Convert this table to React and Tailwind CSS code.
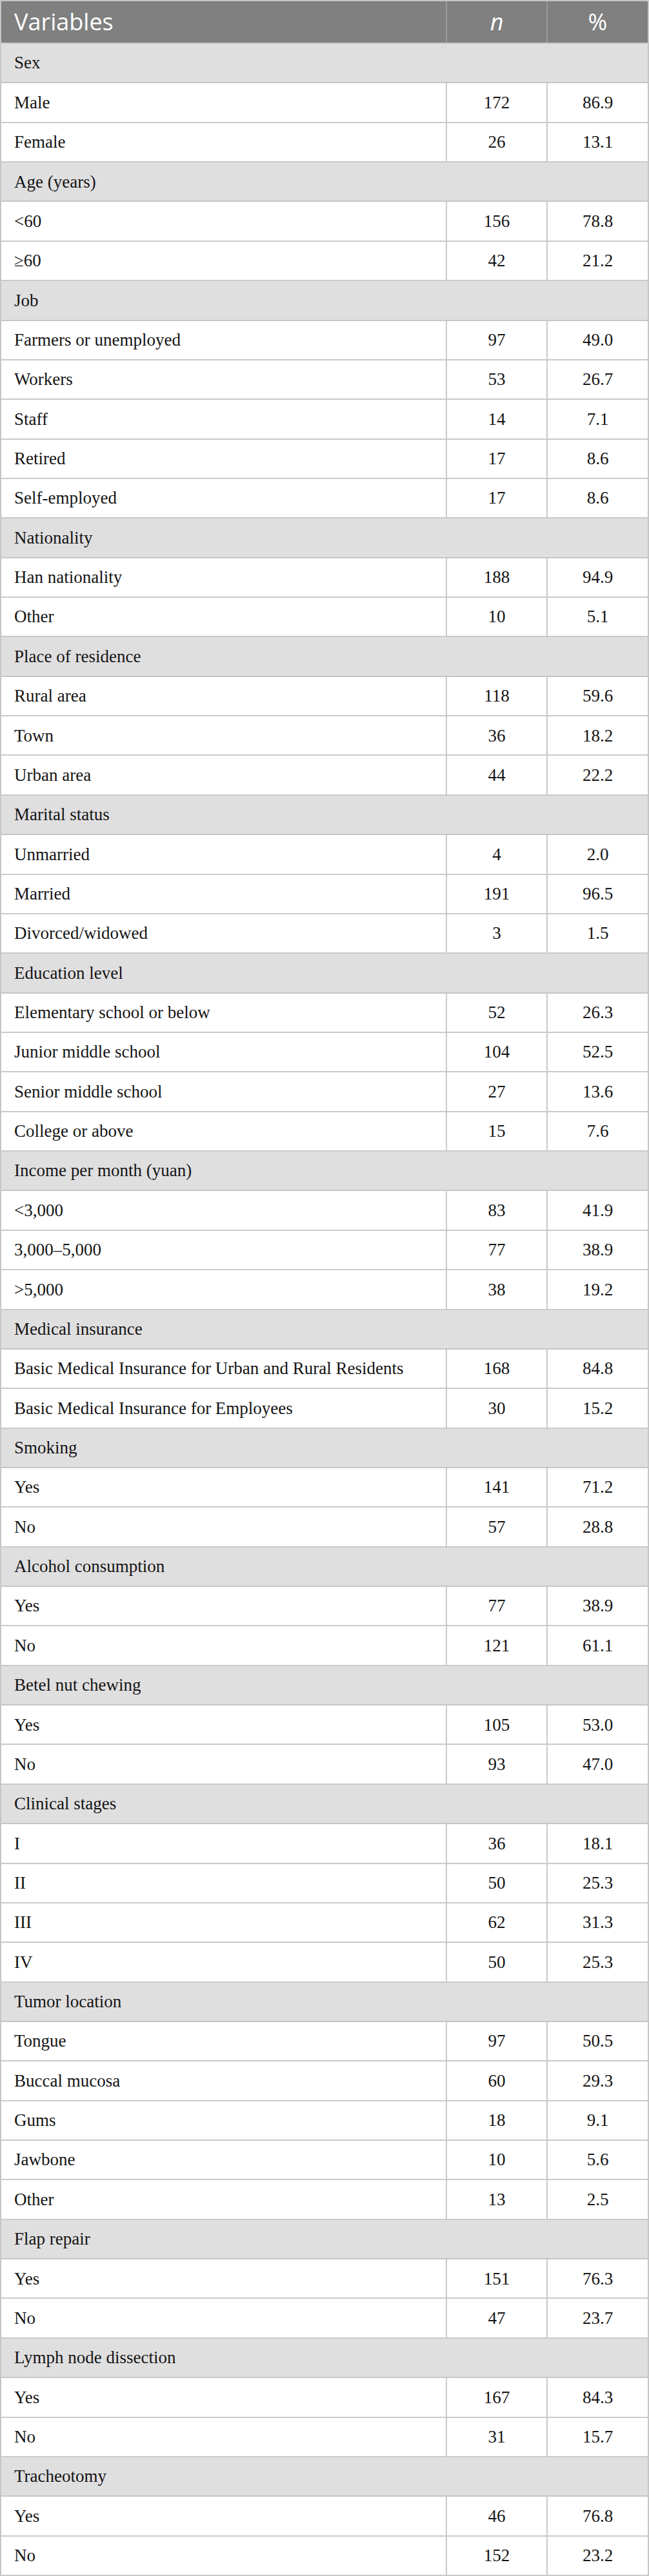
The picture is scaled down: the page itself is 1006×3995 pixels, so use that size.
const groups = [
  ["Sex", [["Male", "172", "86.9"], ["Female", "26", "13.1"]]],
  ["Age (years)", [["<60", "156", "78.8"], ["≥60", "42", "21.2"]]],
  [
    "Job",
    [
      ["Farmers or unemployed", "97", "49.0"],
      ["Workers", "53", "26.7"],
      ["Staff", "14", "7.1"],
      ["Retired", "17", "8.6"],
      ["Self-employed", "17", "8.6"],
    ],
  ],
  ["Nationality", [["Han nationality", "188", "94.9"], ["Other", "10", "5.1"]]],
  [
    "Place of residence",
    [
      ["Rural area", "118", "59.6"],
      ["Town", "36", "18.2"],
      ["Urban area", "44", "22.2"],
    ],
  ],
  [
    "Marital status",
    [
      ["Unmarried", "4", "2.0"],
      ["Married", "191", "96.5"],
      ["Divorced/widowed", "3", "1.5"],
    ],
  ],
  [
    "Education level",
    [
      ["Elementary school or below", "52", "26.3"],
      ["Junior middle school", "104", "52.5"],
      ["Senior middle school", "27", "13.6"],
      ["College or above", "15", "7.6"],
    ],
  ],
  [
    "Income per month (yuan)",
    [
      ["<3,000", "83", "41.9"],
      ["3,000–5,000", "77", "38.9"],
      [">5,000", "38", "19.2"],
    ],
  ],
  [
    "Medical insurance",
    [
      ["Basic Medical Insurance for Urban and Rural Residents", "168", "84.8"],
      ["Basic Medical Insurance for Employees", "30", "15.2"],
    ],
  ],
  ["Smoking", [["Yes", "141", "71.2"], ["No", "57", "28.8"]]],
  ["Alcohol consumption", [["Yes", "77", "38.9"], ["No", "121", "61.1"]]],
  ["Betel nut chewing", [["Yes", "105", "53.0"], ["No", "93", "47.0"]]],
  [
    "Clinical stages",
    [
      ["I", "36", "18.1"],
      ["II", "50", "25.3"],
      ["III", "62", "31.3"],
      ["IV", "50", "25.3"],
    ],
  ],
  [
    "Tumor location",
    [
      ["Tongue", "97", "50.5"],
      ["Buccal mucosa", "60", "29.3"],
      ["Gums", "18", "9.1"],
      ["Jawbone", "10", "5.6"],
      ["Other", "13", "2.5"],
    ],
  ],
  ["Flap repair", [["Yes", "151", "76.3"], ["No", "47", "23.7"]]],
  ["Lymph node dissection", [["Yes", "167", "84.3"], ["No", "31", "15.7"]]],
  ["Tracheotomy", [["Yes", "46", "76.8"], ["No", "152", "23.2"]]],
];

function GroupRow({ label }) {
  return (
    <div className="h-[61.36px] flex items-center px-[20px] bg-[#e0dfe0] border-b-2 border-[#c6c6c6]">
      {label}
    </div>
  );
}

function DataRow({ label, n, pct }) {
  return (
    <div className="h-[61.36px] grid grid-cols-[691px_156px_1fr] border-b-2 border-[#cacaca] bg-white">
      <div className="flex items-center px-[20px] border-r-2 border-[#cacaca] whitespace-nowrap">{label}</div>
      <div className="flex items-center justify-center border-r-2 border-[#cacaca]">{n}</div>
      <div className="flex items-center justify-center">{pct}</div>
    </div>
  );
}

export default function App() {
  return (
    <div className="w-[1006px] bg-white">
      <div className="border-2 border-b-0 border-[#c6c6c6] font-['Liberation_Serif',serif] text-[27px] text-[#141414]">
        <div className="h-[66px] grid grid-cols-[691px_156px_1fr] bg-[#7f807f] text-white font-['Open_Sans',sans-serif] text-[36px] border-b-2 border-[#c6c6c6]">
          <div className="flex items-center px-[20px] border-r-2 border-[#9a9a9a]">Variables</div>
          <div className="flex items-center justify-center italic border-r-2 border-[#9a9a9a]">n</div>
          <div className="flex items-center justify-center">%</div>
        </div>
        {groups.map(([title, rows]) => (
          <div key={title}>
            <GroupRow label={title} />
            {rows.map(([label, n, pct], i) => (
              <DataRow key={title + i} label={label} n={n} pct={pct} />
            ))}
          </div>
        ))}
      </div>
    </div>
  );
}
